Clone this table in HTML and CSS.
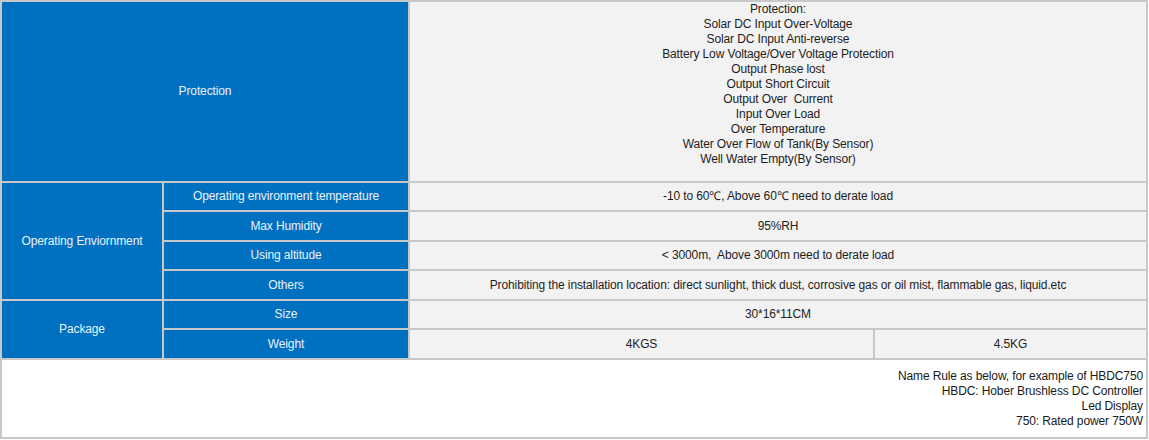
FILE: index.html
```html
<!DOCTYPE html>
<html lang="en">
<head>
<meta charset="utf-8">
<title>Spec table</title>
<link rel="stylesheet" href="styles.css">
</head>
<body>
<table class="spec">
  <colgroup>
    <col class="c1"><col class="c2"><col class="c3"><col class="c4">
  </colgroup>
  <tbody>
    <tr class="r-prot">
      <td class="head" colspan="2">Protection</td>
      <td class="val top" colspan="2">Protection:<br>Solar DC Input Over-Voltage<br>Solar DC Input Anti-reverse<br>Battery Low Voltage/Over Voltage Protection<br>Output Phase lost<br>Output Short Circuit<br>Output Over&nbsp; Current<br>Input Over Load<br>Over Temperature<br>Water Over Flow of Tank(By Sensor)<br>Well Water Empty(By Sensor)</td>
    </tr>
    <tr class="r-a">
      <td class="head" rowspan="4">Operating Enviornment</td>
      <td class="head">Operating environment temperature</td>
      <td class="val" colspan="2">-10 to 60℃, Above 60℃ need to derate load</td>
    </tr>
    <tr class="r-b">
      <td class="head">Max Humidity</td>
      <td class="val" colspan="2">95%RH</td>
    </tr>
    <tr class="r-a">
      <td class="head">Using altitude</td>
      <td class="val" colspan="2">&lt; 3000m,&nbsp; Above 3000m need to derate load</td>
    </tr>
    <tr class="r-b">
      <td class="head">Others</td>
      <td class="val" colspan="2">Prohibiting the installation location: direct sunlight, thick dust, corrosive gas or oil mist, flammable gas, liquid.etc</td>
    </tr>
    <tr class="r-a">
      <td class="head" rowspan="2">Package</td>
      <td class="head">Size</td>
      <td class="val" colspan="2">30*16*11CM</td>
    </tr>
    <tr class="r-b">
      <td class="head">Weight</td>
      <td class="val">4KGS</td>
      <td class="val">4.5KG</td>
    </tr>
    <tr class="r-note">
      <td class="note" colspan="4">Name Rule as below, for example of HBDC750<br>HBDC: Hober Brushless DC Controller<br>Led Display<br>750: Rated power 750W</td>
    </tr>
  </tbody>
</table>
</body>
</html>
```
FILE: styles.css
```css
html, body {
  margin: 0;
  padding: 0;
  background: #ffffff;
}

.spec {
  border-collapse: separate;
  border-spacing: 2px;
  background: #c8c8c8;
  table-layout: fixed;
  width: 1148px;
  font-family: "Liberation Sans", Arial, sans-serif;
  font-size: 12px;
  line-height: 15px;
  letter-spacing: -0.12px;
}

.c1 { width: 160px; }
.c2 { width: 244px; }
.c3 { width: 463px; }
.c4 { width: 271px; }

.spec td {
  padding: 0;
  text-align: center;
  vertical-align: middle;
}

.head {
  background: #0070c0;
  color: #eaf2fb;
}

.val {
  background: #f2f2f2;
  color: #1e1e1e;
}

.val.top {
  vertical-align: top;
}

.r-prot td { height: 179px; }
.r-a td { height: 27px; }
.r-b td { height: 28px; }

.r-note td { height: 77px; }

.spec td.note {
  background: #ffffff;
  color: #1a1a1a;
  text-align: right;
  padding-right: 3px;
}
```
